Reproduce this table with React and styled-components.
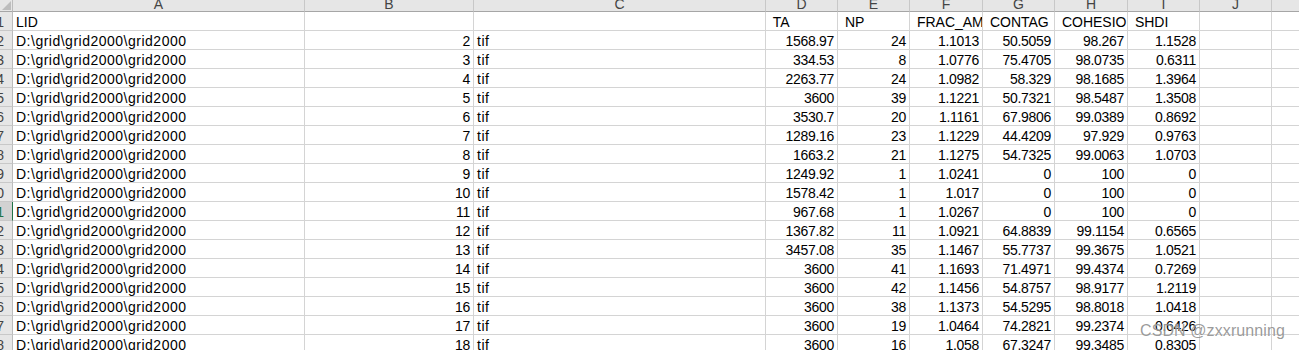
import React from "react";
import styled, { createGlobalStyle } from "styled-components";

const GlobalStyle = createGlobalStyle`
  body {
    margin: 0;
    background: #ffffff;
    overflow: hidden;
  }
`;

const COLS = ["A", "B", "C", "D", "E", "F", "G", "H", "I", "J", "K"];

const rows = [
  [2, 1568.97, 24, 1.1013, 50.5059, 98.267, 1.1528],
  [3, 334.53, 8, 1.0776, 75.4705, 98.0735, 0.6311],
  [4, 2263.77, 24, 1.0982, 58.329, 98.1685, 1.3964],
  [5, 3600, 39, 1.1221, 50.7321, 98.5487, 1.3508],
  [6, 3530.7, 20, 1.1161, 67.9806, 99.0389, 0.8692],
  [7, 1289.16, 23, 1.1229, 44.4209, 97.929, 0.9763],
  [8, 1663.2, 21, 1.1275, 54.7325, 99.0063, 1.0703],
  [9, 1249.92, 1, 1.0241, 0, 100, 0],
  [10, 1578.42, 1, 1.017, 0, 100, 0],
  [11, 967.68, 1, 1.0267, 0, 100, 0],
  [12, 1367.82, 11, 1.0921, 64.8839, 99.1154, 0.6565],
  [13, 3457.08, 35, 1.1467, 55.7737, 99.3675, 1.0521],
  [14, 3600, 41, 1.1693, 71.4971, 99.4374, 0.7269],
  [15, 3600, 42, 1.1456, 54.8757, 98.9177, 1.2119],
  [16, 3600, 38, 1.1373, 54.5295, 98.8018, 1.0418],
  [17, 3600, 19, 1.0464, 74.2821, 99.2374, 0.6426],
  [18, 3600, 16, 1.058, 67.3247, 99.3485, 0.8305],
];

const Viewport = styled.div`
  position: relative;
  width: 1299px;
  height: 350px;
  overflow: hidden;
`;

const Sheet = styled.div`
  display: grid;
  grid-template-columns: 13px 292px 169px 292px 72px 72px 73px 72px 73px 72px 72px 72px;
  grid-template-rows: 12px;
  grid-auto-rows: 19px;
  width: max-content;
  font-family: "Liberation Sans", Arial, sans-serif;
  font-size: 14px;
  color: #000000;
`;

const Corner = styled.div`
  position: relative;
  background: #e6e6e6;
  border-right: 1px solid #bcbcbc;
  border-bottom: 1px solid #a6a6a6;
  box-sizing: border-box;
  overflow: hidden;

  &::after {
    content: "";
    position: absolute;
    right: 1px;
    bottom: 1px;
    border-style: solid;
    border-width: 0 0 9px 9px;
    border-color: transparent transparent #bdbdbd transparent;
  }
`;

const ColHeader = styled.div`
  background: #e6e6e6;
  border-right: 1px solid #c8c8c8;
  border-bottom: 1px solid #a6a6a6;
  box-sizing: border-box;
  overflow: hidden;
  text-align: center;
  line-height: 8px;
  color: #444444;
`;

const RowHeader = styled.div`
  background: ${(p) => (p.$active ? "#d2d2d2" : "#e6e6e6")};
  color: ${(p) => (p.$active ? "#217346" : "#444444")};
  border-right: 1px solid ${(p) => (p.$active ? "#217346" : "#bcbcbc")};
  border-bottom: 1px solid #c8c8c8;
  box-sizing: border-box;
  overflow: hidden;
  white-space: nowrap;
  direction: rtl;
  padding-right: 8px;
  padding-top: 1px;
  line-height: 18px;
`;

const Cell = styled.div`
  border-right: 1px solid #d4d4d4;
  border-bottom: 1px solid #d4d4d4;
  box-sizing: border-box;
  overflow: hidden;
  white-space: pre;
  padding: 1px 3px 0 3px;
  line-height: 18px;
  text-align: ${(p) => (p.$num ? "right" : "left")};
  letter-spacing: ${(p) => (p.$num ? "-0.3px" : p.$title ? "0" : "0.5px")};
`;

const Watermark = styled.div`
  position: absolute;
  right: 14px;
  bottom: 10px;
  font-family: "Liberation Sans", Arial, sans-serif;
  font-size: 16px;
  color: rgba(110, 110, 110, 0.7);
  text-shadow: 0 0 1px rgba(255, 255, 255, 0.9);
  letter-spacing: 0.1px;
`;

function DataRow({ row, rowNo }) {
  const [b, ta, np, frac, contag, coh, shdi] = row;
  return (
    <>
      <RowHeader $active={rowNo === 11}>{rowNo}</RowHeader>
      <Cell>D:\grid\grid2000\grid2000</Cell>
      <Cell $num>{b}</Cell>
      <Cell>tif</Cell>
      <Cell $num>{ta}</Cell>
      <Cell $num>{np}</Cell>
      <Cell $num>{frac}</Cell>
      <Cell $num>{contag}</Cell>
      <Cell $num>{coh}</Cell>
      <Cell $num>{shdi}</Cell>
      <Cell />
      <Cell />
    </>
  );
}

export default function App() {
  const titles = ["LID", "", "", " TA", " NP", " FRAC_AM", " CONTAG", " COHESION", " SHDI", "", ""];
  return (
    <>
      <GlobalStyle />
      <Viewport>
        <Sheet>
          <Corner />
          {COLS.map((c) => (
            <ColHeader key={c}>{c}</ColHeader>
          ))}

          <RowHeader>1</RowHeader>
          {titles.map((t, i) => (
            <Cell key={i} $title>
              {t}
            </Cell>
          ))}

          {rows.map((r) => (
            <DataRow key={r[0]} row={r} rowNo={r[0]} />
          ))}
        </Sheet>
        <Watermark>CSDN @zxxrunning</Watermark>
      </Viewport>
    </>
  );
}
